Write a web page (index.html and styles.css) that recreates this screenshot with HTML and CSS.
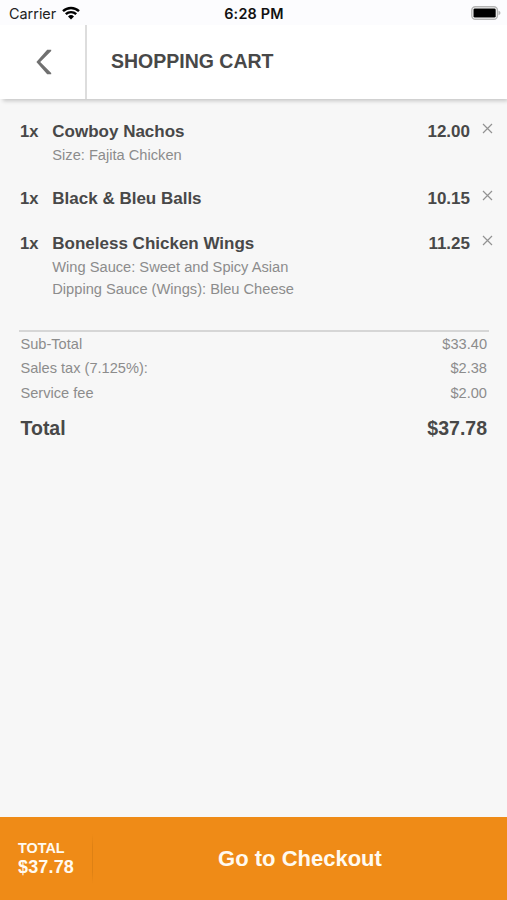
FILE: index.html
```html
<!DOCTYPE html>
<html lang="en">
<head>
<meta charset="utf-8">
<title>Shopping Cart</title>
<link rel="stylesheet" href="styles.css">
</head>
<body>
<div class="status">
  <div class="carrier"><span>Carrier</span>
    <svg class="wifi" viewBox="0 0 18 14" width="18" height="14"><path d="M1 5.2A11.5 11.5 0 0 1 17 5.2M3.8 8.2A7.5 7.5 0 0 1 14.2 8.2" fill="none" stroke="#000" stroke-width="2.4"/><path d="M9 13.5L6 10.5A4.3 4.3 0 0 1 12 10.5Z"/></svg>
  </div>
  <div class="time">6:28 PM</div>
  <svg class="battery" viewBox="0 0 30 14" width="30" height="14"><rect x=".8" y=".8" width="25.6" height="12.4" rx="3.5" fill="#fff" stroke="#b4b4b4" stroke-width="1.4"/><rect x="2.5" y="2.4" width="22.2" height="9.2" rx="1.4"/><path d="M27.5 4.8Q29.5 5.4 29.5 7T27.5 9.2Z" fill="#b4b4b4"/></svg>
</div>
<header class="header">
  <div class="back"><svg viewBox="0 0 18 26" width="18" height="26"><path d="M12.2 .8H16.2V2L5.2 13L16.2 24V25.2H12.2L1.4 13Z" fill="#707070"/></svg></div>
  <h1 class="title">SHOPPING CART</h1>
</header>
<main class="cart">
  <section class="item first">
    <span class="qty">1x</span>
    <div class="info"><div class="name">Cowboy Nachos</div><div class="opt">Size: Fajita Chicken</div></div>
    <span class="price">12.00</span>
    <svg class="remove" viewBox="0 0 11 11" width="11" height="11"><path d="M1 1L10 10M10 1L1 10"/></svg>
  </section>
  <section class="item second">
    <span class="qty">1x</span>
    <div class="info"><div class="name">Black &amp; Bleu Balls</div></div>
    <span class="price">10.15</span>
    <svg class="remove" viewBox="0 0 11 11" width="11" height="11"><path d="M1 1L10 10M10 1L1 10"/></svg>
  </section>
  <section class="item third">
    <span class="qty">1x</span>
    <div class="info"><div class="name">Boneless Chicken Wings</div><div class="opt">Wing Sauce: Sweet and Spicy Asian</div><div class="opt">Dipping Sauce (Wings): Bleu Cheese</div></div>
    <span class="price">11.25</span>
    <svg class="remove" viewBox="0 0 11 11" width="11" height="11"><path d="M1 1L10 10M10 1L1 10"/></svg>
  </section>
  <section class="summary">
    <div class="line"><span>Sub-Total</span><span>$33.40</span></div>
    <div class="line"><span>Sales tax (7.125%):</span><span>$2.38</span></div>
    <div class="line"><span>Service fee</span><span>$2.00</span></div>
    <div class="line total"><span>Total</span><span>$37.78</span></div>
  </section>
</main>
<footer class="checkout">
  <div class="sum"><div class="label">TOTAL</div><div class="amount">$37.78</div></div>
  <div class="divider"></div>
  <div class="go"><span>Go to Checkout</span></div>
</footer>
</body>
</html>
```
FILE: styles.css
```css
* { box-sizing: border-box; }
body {
  margin: 0;
  height: 900px;
  display: flex;
  flex-direction: column;
  overflow: hidden;
  background: #f7f7f7;
  font-family: "Liberation Sans", Arial, sans-serif;
  color: #484848;
}
.status {
  height: 25px;
  flex: none;
  padding: 1px 6px 0 9px;
  display: grid;
  grid-template-columns: 1fr auto 1fr;
  align-items: center;
  background: #fcfcfe;
  color: #222;
  font-family: Inter, sans-serif;
  font-size: 14.4px;
}
.carrier { display: flex; align-items: center; gap: 6px; }
.time { font-weight: 600; color: #111; letter-spacing: .2px; margin-right: 2px; }
.battery { justify-self: end; }
.header {
  height: 74px;
  flex: none;
  display: flex;
  align-items: center;
  background: #fff;
  box-shadow: 2px 3px 4px -1px rgba(0, 0, 0, .2);
}
.back {
  width: 87px;
  height: 100%;
  display: flex;
  align-items: center;
  justify-content: center;
  padding-left: 3px;
  border-right: 2px solid #ddd;
}
.title { margin: 0 0 2px 24px; font-size: 19.5px; line-height: 24px; }
.cart { flex: 1; padding: 22px 14px 0 20px; }
.item { display: flex; align-items: flex-start; font-size: 17px; line-height: 22px; }
.first { height: 67px; }
.second { height: 45px; }
.third { height: 97px; }
.qty { width: 32.3px; font-weight: bold; font-size: 16.6px; }
.info { flex: 1; }
.name { font-weight: bold; }
.opt { font-size: 14.65px; color: #8c8c8c; line-height: 22px; padding-top: 1px; margin-bottom: -1px; }
.price { font-weight: bold; margin-right: 12px; }
.remove { margin-top: 2px; fill: none; stroke: #929292; stroke-width: 1.2; }
.summary { margin: 0 4px 0 -1px; border-top: 2px solid #d6d6d6; }
.line { display: flex; justify-content: space-between; padding: 0 2px 0 1.5px; font-size: 14.6px; line-height: 24.4px; color: #8c8c8c; }
.total { margin-top: 11px; font-size: 19.5px; font-weight: bold; color: #484848; }
.checkout { height: 83px; flex: none; display: flex; align-items: center; background: #ef8b17; color: #fffaf0; font-weight: bold; }
.sum { width: 92px; height: 46px; padding: 4px 0 0 18px; }
.divider { width: 1px; height: 50px; background: linear-gradient(transparent, #de8114 25%, #de8114 75%, transparent); }
.label { font-size: 14.4px; line-height: 17px; }
.amount { font-size: 18px; line-height: 20px; letter-spacing: .15px; }
.go { flex: 1; padding-top: 1px; text-align: center; font-size: 22px; }
```
